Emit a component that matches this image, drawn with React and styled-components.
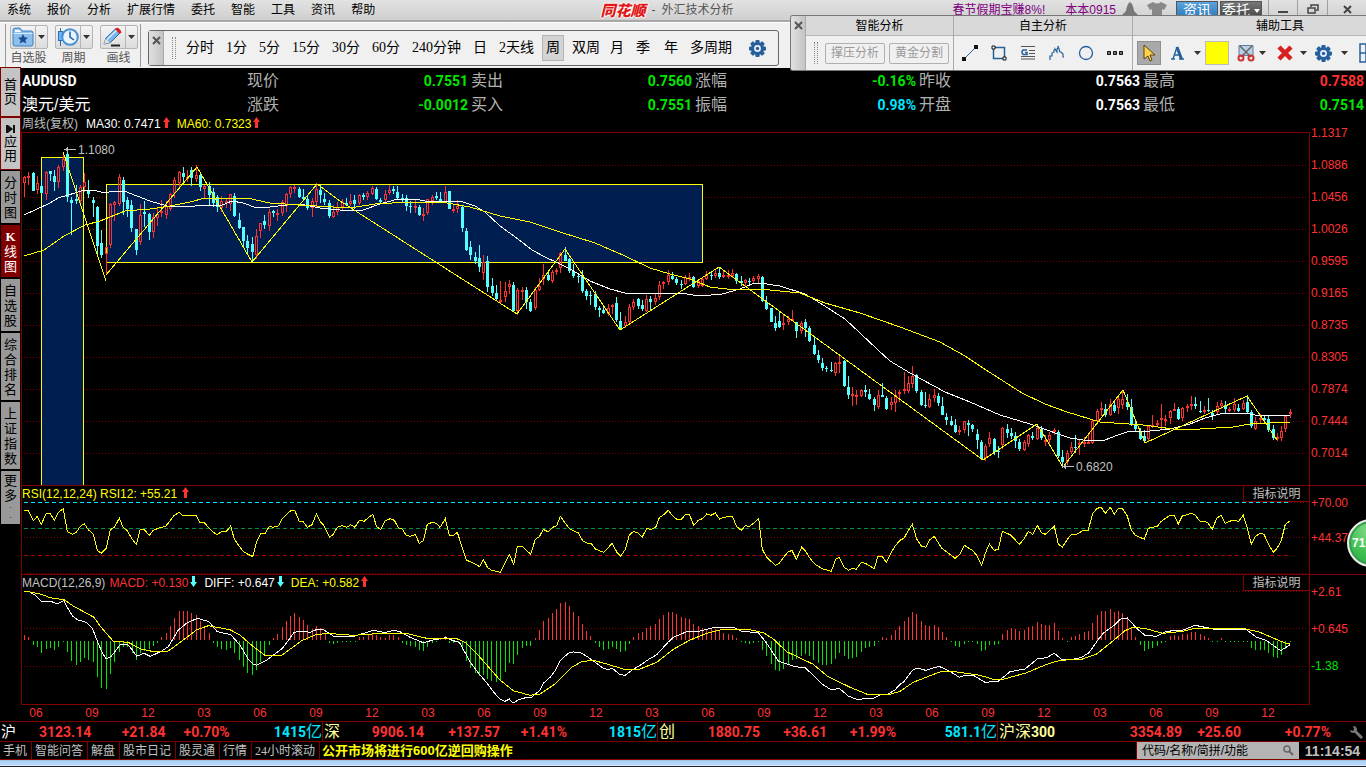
import React from 'react';
import styled, { createGlobalStyle, css } from 'styled-components';

const Global = createGlobalStyle`
  * { box-sizing: border-box; }
  html, body { margin: 0; background: #000; }
  body { font: 12px/16px "Liberation Sans", "Noto Sans CJK SC", sans-serif; color: #c0c0c0; }
  button { font: inherit; padding: 0; margin: 0; border: 0; background: none; color: inherit; }
  a { color: inherit; text-decoration: none; }
`;

const RED = '#ff3232';
const GREEN = '#00e600';
const CYAN = '#00e6ff';
const LINE = '#800000';

const Page = styled.div`
  position: relative;
  overflow: hidden;
  min-width: 1100px;
  background: #000;
`;

/* ---------- title bar ---------- */
const TitleBar = styled.header`
  display: grid;
  grid-template-columns: 1fr auto 1fr;
  height: 22px;
  background: linear-gradient(#e2e2e2, #cfcfcf);
  border-bottom: 2px solid #a8a8a8;
`;
const Menu = styled.nav`
  display: flex;
  align-items: center;
  gap: 16px;
  padding-left: 7px;
  color: #000;
`;
const Caption = styled.div`
  display: flex;
  align-items: center;
  gap: 6px;
  padding-right: 32px;
  color: #555;
`;
const Logo = styled.b`
  font: italic 900 15px/20px "Noto Sans CJK SC", sans-serif;
  color: #e01818;
  text-shadow: 1px 0 #fff, -1px 0 #fff, 0 1px #fff, 0 -1px #fff;
`;
const TitleRight = styled.div`
  display: flex;
  justify-content: flex-end;
  align-items: flex-start;
`;
const PurpleLink = styled.a`
  color: #800080;
  text-decoration: underline;
  line-height: 20px;
  margin-right: ${p => p.$gap}px;
`;
const TopIcon = styled.svg`
  margin: 2px 9px 0 0;
  flex: none;
`;
const TopButton = styled.button`
  width: 42px;
  height: 18px;
  margin: 1px ${p => (p.$blue ? 2 : 6)}px 0 0;
  border: 1px solid #555;
  font-size: 14px;
  line-height: 16px;
  white-space: nowrap;
  color: #fff;
  background: ${p => (p.$blue ? 'linear-gradient(#5ba3dd, #2c78bd)' : 'linear-gradient(#777, #444)')};
`;
const WinButton = styled.button`
  width: ${p => p.$w}px;
  height: 18px;
  border-left: 1px solid #a0a0a0;
  color: #444;
  display: flex;
  align-items: center;
  justify-content: center;
`;

/* ---------- toolbar ---------- */
const Toolbar = styled.div`
  display: flex;
  align-items: flex-start;
  height: 46px;
  background: #f0f0f0;
  border-top: 1px solid #fff;
`;
const BigGroup = styled.div`
  display: flex;
  gap: 6px;
  height: 43px;
  margin: 1px 0 0 5px;
  padding: 1px 2px 0 3px;
  border-left: 1px solid #999;
  border-right: 1px solid #999;
`;
const BigItem = styled.div`
  display: flex;
  flex-direction: column;
  align-items: center;
  width: 39px;
  line-height: 18px;
  color: #555;
  white-space: nowrap;
`;
const Split = styled.div`
  display: flex;
  width: 38px;
  height: 25px;
  border: 1px solid #b5b5b5;
  border-radius: 2px;
  background: linear-gradient(#f4f4f4, #dcdcdc);
`;
const SplitMain = styled.button`
  width: 25px;
  border-right: 1px solid #b5b5b5;
  display: grid;
  place-items: center;
`;
const SplitDrop = styled.button`
  flex: 1;
  display: grid;
  place-items: center;
`;
const PeriodBar = styled.div`
  display: flex;
  align-items: stretch;
  height: 36px;
  margin: 7px 0 0 7px;
  border: 1px solid #666;
  border-radius: 3px;
`;
const Handle = styled.button`
  flex: none;
  width: 15px;
  padding-top: ${p => p.$top}px;
  border-right: 1px solid #aaa;
  background: linear-gradient(90deg, #e0e0e0, #c4c4c4);
  display: flex;
  justify-content: center;
  align-items: flex-start;
`;
const Grip = styled.i`
  align-self: center;
  flex: none;
  width: 4px;
  height: 22px;
  margin: 0 ${p => p.$gap}px 0 8px;
  border-left: 1px dotted #888;
  border-right: 1px dotted #888;
`;
const Period = styled.button`
  align-self: center;
  flex: none;
  height: 26px;
  padding: 0 ${p => (p.$tight ? 1 : 3)}px;
  margin-right: ${p => (p.$tight ? 8 : 4)}px;
  border: 1px solid ${p => (p.$on ? '#b4b4b4' : 'transparent')};
  background: ${p => (p.$on ? '#d4d4d4' : 'none')};
  font: 14px/22px "Liberation Serif", "Noto Sans CJK SC", serif;
  color: #000;
  white-space: nowrap;
`;
const GearButton = styled.button`
  align-self: center;
  display: grid;
  margin: 0 12px 0 9px;
`;

/* ---------- floating drawing palette ---------- */
const Palette = styled.section`
  position: absolute;
  top: 15px;
  right: 0;
  z-index: 2;
  display: flex;
  width: 576px;
  height: 56px;
  overflow: hidden;
  border: 1px solid #777;
  border-right: 0;
  border-radius: 3px 0 0 3px;
  background: #f0f0f0;
`;
const PaletteGroup = styled.div`
  flex: none;
  width: ${p => p.$w}px;
  border-right: 1px solid #aaa;
`;
const PaletteTitle = styled.h2`
  height: 20px;
  margin: 0;
  border-bottom: 1px solid #b4b4b4;
  background: #d9d9d9;
  font-size: 12px;
  font-weight: 400;
  line-height: 20px;
  text-align: center;
  color: #000;
`;
const Tools = styled.div`
  display: flex;
  align-items: center;
  height: 34px;
  gap: ${p => p.$gap || 0}px;
  padding-left: ${p => p.$pad || 0}px;
`;
const TextTool = styled.button`
  flex: none;
  width: 60px;
  height: 21px;
  margin-right: 4px;
  border: 1px solid #b0b0b0;
  border-radius: 2px;
  line-height: 19px;
  color: #999;
`;
const Tool = styled.button`
  flex: none;
  width: ${p => p.$w || 21}px;
  height: 24px;
  display: grid;
  place-items: center;
  ${p => p.$on && css`background: #a9a9a9; border: 1px solid #909090;`}
`;
const Swatch = styled(Tool)`
  background: #ff0;
  border: 1px solid #bbb;
  margin: 0 6px 0 4px;
`;

/* ---------- body ---------- */
const Body = styled.div`
  display: flex;
  border-bottom: 1px solid ${LINE};
`;
const Side = styled.nav`
  flex: none;
  width: 21px;
  display: flex;
  flex-direction: column;
  gap: 2px;
  padding: 0 0 0 1px;
`;
const SideTab = styled.button`
  width: 19px;
  height: ${p => p.$h}px;
  display: flex;
  flex-direction: column;
  align-items: center;
  justify-content: center;
  font-size: 13px;
  line-height: ${p => (p.$light ? 14 : 15)}px;
  color: ${p => (p.$on ? '#fff' : '#000')};
  background: ${p => (p.$on ? LINE : p.$light ? '#c4c4c4' : '#999')};
  ${p => p.$light && css`box-shadow: 0 0 0 1px ${LINE};`}
  svg { margin-bottom: 2px; }
  b { font-family: "Liberation Serif", serif; }
  i { font: 8px/10px "Liberation Sans", sans-serif; }
`;
const Main = styled.main`
  flex: 1;
  min-width: 0;
`;
const Quote = styled.dl`
  display: grid;
  grid-template-columns: repeat(6, 1fr);
  grid-auto-rows: 24px;
  margin: 0;
  padding: 1px 0 0 1px;
`;
const Name = styled.div`
  font: ${p => (p.$code ? '700 14px/24px Roboto' : '16px/24px "Liberation Sans"')}, "Noto Sans CJK SC", sans-serif;
  color: #fff;
`;
const Cell = styled.div`
  display: flex;
  justify-content: space-between;
  padding: 0 2px 0 1px;
  line-height: 24px;
  dt { font-size: 16px; color: #b0b0b0; }
  dd { margin: 0; font: 700 14px/24px Roboto, sans-serif; color: ${p => p.$c}; }
`;
const Panel = styled.section`
  display: grid;
  grid-template-columns: 1fr 56px;
  ${p => p.$ruled && css`border-top: 1px solid ${LINE};`}
`;
const Frame = styled.div`
  border: 0 solid ${LINE};
  border-width: 0 1px;
  ${p => p.$last && css`border-bottom-width: 1px;`}
`;
const Plot = styled.svg`
  display: block;
  width: 100%;
  height: ${p => p.$h}px;
  ${p => p.$boxed && css`border: 1px solid ${LINE}; border-bottom: 0;`}
`;
const Legend = styled.div`
  display: flex;
  align-items: center;
  height: ${p => p.$h}px;
  padding-left: ${p => p.$pad || 0}px;
  line-height: ${p => p.$h}px;
  white-space: nowrap;
`;
const Item = styled.span`
  color: ${p => p.$c};
  margin-right: ${p => p.$gap || 0}px;
`;
const Explain = styled.button`
  align-self: stretch;
  width: 66px;
  margin-left: auto;
  border: 0 solid ${LINE};
  border-width: 0 0 1px 1px;
  line-height: 17px;
  color: #c0c0c0;
`;
const Axis = styled.div`
  display: flex;
  flex-direction: column;
  gap: ${p => p.$gap || 0}px;
  padding: ${p => (p.$gap ? 1 : 0)}px 0 0 1px;
  line-height: 32px;
  color: ${RED};
  span:last-child { color: ${p => p.$end || RED}; }
`;
const Dates = styled.div`
  display: flex;
  justify-content: space-between;
  height: 16px;
  padding: 0 84px 0 1px;
  color: ${RED};
  span { width: 28px; text-align: center; }
`;

/* ---------- bottom bars ---------- */
const IndexBar = styled.div`
  display: grid;
  grid-template-columns: 323fr 335fr 340fr 368fr;
  height: 20px;
  border-bottom: 1px solid ${LINE};
`;
const Index = styled.div`
  display: grid;
  grid-template-columns: ${p => p.$cols};
  border-right: ${p => (p.$end ? 0 : 1)}px solid ${LINE};
  font: 700 14px/20px Roboto, "Noto Sans CJK SC", sans-serif;
  color: ${RED};
  text-align: right;
  white-space: nowrap;
`;
const IndexName = styled.span`
  padding-left: 1px;
  font-size: ${p => (p.$first ? 15 : 16)}px;
  font-weight: 400;
  text-align: left;
  color: ${p => (p.$first ? '#fff' : '#ffff99')};
  b { font-size: 14px; }
`;
const Turnover = styled.span`
  color: ${CYAN};
  i { font-style: normal; font-weight: 400; font-size: 16px; }
`;
const Setup = styled.button`
  justify-self: start;
  align-self: center;
  display: grid;
  margin-left: 18px;
`;
const Footer = styled.footer`
  display: flex;
  align-items: stretch;
  height: 18px;
  border-bottom: 1px solid ${LINE};
  line-height: 18px;
`;
const FootLink = styled.a`
  padding: 0 4px 0 3px;
  border-right: 1px solid ${LINE};
  font-family: "Liberation Serif", "Noto Sans CJK SC", serif;
  white-space: nowrap;
`;
const Ticker = styled.b`
  flex: 1;
  padding-left: 2px;
  font: 700 13px/18px "Liberation Sans", "Noto Sans CJK SC", sans-serif;
  color: #ff0;
`;
const Search = styled.label`
  display: flex;
  align-items: center;
  width: 163px;
  padding: 0 5px 0 5px;
  border-left: 1px solid ${LINE};
  background: #b4b4b4;
  input {
    flex: 1;
    min-width: 0;
    padding: 0;
    border: 0;
    background: none;
    font: 12px/16px "Liberation Sans", "Noto Sans CJK SC", sans-serif;
    color: #000;
  }
  input::placeholder { color: #000; opacity: 1; }
`;
const Clock = styled.time`
  width: 67px;
  text-align: center;
  font-size: 14px;
  font-weight: 700;
`;
const Strip = styled.div`
  height: 7px;
  border-bottom: 1px solid #222;
  background: linear-gradient(#9cbcdc, #b4d4f8 30%, #b4d4f8 75%, #e8f4ff);
`;
const Badge = styled.button`
  position: absolute;
  top: 519px;
  right: -29px;
  width: 48px;
  height: 48px;
  border: 2px solid #eee;
  border-radius: 50%;
  background: radial-gradient(circle at 50% 20%, #8ade8a, #3cbf50 60%, #2aa545);
  box-shadow: inset 0 0 0 2px #3a9a4e;
  text-align: left;
  padding-left: 3px;
  font: 700 12px/16px "Liberation Sans", sans-serif;
  color: #fff;
`;

/* ---------- chart data, in thirds of a pixel from each block's origin ---------- */
const PRICE_BLOCKS = [
  [20, 130, `u13 137 142 158 200;u26 125 137 140 165;d40 126 129 182 183;u52 137 160 180 192;d65 150 168 188 190;u79 122 126 193 210;d91 122 123 131 152;d103 120 138 156 182;u115 104 112 155 173;u130 65 86 112 122;d142 60 72 202 215;d154 200 210 219 315;d169 165 208 212 222;u181 165 172 212 222;u193 129 157 171 185;d205 150 180 192 203;d220 200 210 219 260;d232 228 230 348 375;d244 300 338 375 384;u259 350 352 371 435;u271 218 222 344 355;u283 212 217 226 272;u298 132 142 223 228;d310 140 150 216 256;d322 200 209 237 260;d334 210 224 295 305;d349 297 298 360 375;u361 222 254 335 345;d373 212 245 252 290;d388 250 253 306 330;u400 250 262 306 324;u412 235 253 264 288;u424 210 244 250 262;u439 212 228 254 266;u451 188 192 238 242;u463 142 150 190 204;u478 122 127 158 170;d490 110 130 142 158;u502 120 140 144 156;d514 112 120 144 168;u529 105 136 146 156;d541 130 136 171 182;u553 164 168 178 204;d568 155 168 194 228;d580 174 187 219 230;d592 196 202 230 246;u604 198 213 234 246;u619 206 213 219 235;u631 192 193 222 244;d643 190 198 258 260;d658 248 270 294 296;d670 290 292 332 350;d682 314 332 354 368;d697 320 341 366 396;u709 298 318 374 386;u721 278 280 304 325;d733 254 272 284 298;u748 238 247 288 304;d760 240 242 248 262;u772 236 250 252 272;u787 210 216 248 258;u799 190 192 228 246;u811 168 172 192 204;u823 164 172 175 190;d838 172 177 202 204;d850 176 200 206 210;d862 196 208 234 240;u877 205 213 234 262;u889 160 178 216 232;d901 166 180 196 218;d913 190 206 216 224;d928 210 220 258 264;u940 225 247 261 264;u952 216 232 247 256`],
  [340, 150, `u7 148 156 170 184;d19 144 158 164 168;u31 132 153 162 168;d43 136 150 162 178;u58 132 136 158 164;d70 128 135 141 150;u82 124 128 142 150;u97 108 114 132 136;d109 112 116 146 150;d121 144 150 156 160;u136 120 132 150 158;u148 105 120 128 135;d160 108 117 123 132;d172 108 126 144 148;d187 132 144 150 158;d199 135 144 168 182;d211 156 169 172 188;u226 150 168 174 188;d238 165 170 195 198;u250 174 192 195 212;u262 148 148 190 195;u277 135 142 154 165;d289 126 138 144 150;d301 126 147 153 160;u316 108 126 158 160;d328 122 124 177 178;u340 164 177 180 188;u352 150 168 177 188;d367 168 170 234 246;d379 234 243 300 303;d391 273 291 315 330;d406 306 321 333 342;d418 285 324 351 366;u430 315 336 368 390;d442 318 333 411 426;d457 384 408 429 438;d469 405 429 447 453;u481 393 450 452 460;u496 396 423 441 456;u508 390 402 411 432;d520 396 405 483 486;u532 414 420 483 495;u547 410 420 423 450;d559 411 420 456 476;d571 447 456 483 486;u586 411 420 474 480;u598 384 408 420 424;u610 342 375 388 405;d625 360 375 390 393;u637 360 366 393 399;u649 354 360 363 375;u661 306 310 353 370;d676 291 315 333 333;d688 324 328 363 369;d700 342 363 378 384;d715 375 378 381 399;d727 360 375 423 429;d739 417 423 438 450;d751 423 434 437 465;d766 423 432 471 480;d778 468 474 480 501;d790 471 480 489 492;u805 462 474 492 498;u817 462 465 471 492;d829 441 459 510 516;d841 486 513 537 540;u856 498 516 528 534;u868 462 471 516 522;u880 447 456 472 480;d895 444 447 468 477;d907 450 465 477 483;u919 435 447 483 486;d931 438 447 456 483;u946 430 444 456 465;u958 393 405 441 450;u970 394 396 402 417`],
  [640, 230, `u85 120 135 156 165;d97 126 138 147 150;d109 140 147 160 165;d124 150 162 165 177;u136 135 142 162 165;u148 129 141 143 152;d160 138 141 171 174;u175 147 153 168 174;u187 144 147 168 171;u199 123 132 147 150;d214 124 135 138 150;u226 120 129 138 144;d238 111 129 141 147;u250 124 135 141 144;u265 120 135 138 147;u277 117 129 138 144;d289 129 132 153 162;d304 138 153 159 168;u316 147 150 160 168;d328 144 153 156 168;u340 138 144 153 162;u355 132 138 147 160;d367 138 141 213 216;d379 198 216 237 240;d394 234 234 276 276;d406 258 279 294 303;d418 246 273 291 294;u430 255 279 285 300;u445 258 267 276 285;u457 240 267 270 274;d469 276 276 303 324;u484 273 279 303 312;d496 268 276 294 321;d508 288 294 333 336;d523 321 345 372 375;d535 360 375 390 399;d547 384 399 414 423;d559 408 414 417 426;d574 396 420 423 426;u586 396 400 429 438;u598 375 396 399 429;d613 390 393 468 471;d625 438 471 495 507;u637 471 492 495 528;u649 480 495 497 525;u664 477 480 498 501;d676 465 480 486 501;d688 477 492 507 510;d703 501 507 525 543;u715 480 495 531 537;d727 459 495 501 501;d739 498 504 537 540;u754 501 516 525 540;u766 480 495 519 546;u778 480 486 489 516;u793 426 477 483 492;u805 438 459 483 489;u817 408 438 461 474;d829 432 435 483 489;d844 480 486 525 528;d856 486 525 528 534;u868 492 507 531 534;u883 477 495 504 516;d895 489 498 519 528;d907 501 528 555 555;d919 549 561 570 585;d934 558 573 585 588;d946 567 585 606 609;u958 588 600 605 615;u973 573 574 600 609;d985 570 579 585 618;d997 582 585 597 606;d1012 597 612 630 657;d1024 630 636 687 690;u1036 642 648 684 693`],
  [960, 370, `u88 186 204 222 232;d103 204 207 246 255;d115 228 243 247 264;u127 171 174 225 236;d142 162 177 189 204;d154 174 189 198 207;d166 186 198 213 234;d178 207 216 237 243;u193 210 216 240 243;u205 192 195 222 231;d217 186 198 204 210;u232 162 174 207 210;d244 168 177 204 209;u256 195 210 213 227;u268 186 195 210 222;u283 174 180 186 195;d295 180 186 258 264;d307 240 261 276 294;u322 240 250 276 285;u334 216 231 246 252;d346 195 231 234 250;u358 210 218 222 255;u373 200 216 219 231;u385 195 215 218 222;u397 150 153 219 222;u412 117 123 153 160;u424 96 114 120 138;d436 102 117 135 141;u451 87 102 135 138;d463 96 105 123 130;u475 81 87 114 132;u487 60 87 105 117;d502 72 96 111 120;d514 87 111 162 168;d526 150 162 177 186;d541 174 186 207 210;d553 180 198 213 220;u565 165 168 207 213;u577 135 165 170 174;u592 150 159 162 171;u604 102 144 150 177;u616 135 147 153 168;u631 120 123 145 162;u643 99 117 120 124;d655 111 117 147 150;u667 110 114 144 153;u682 102 108 114 126;u694 78 102 108 120;d706 81 102 108 117;d721 93 123 124 129;u733 108 120 123 132;d745 84 120 122 126;d757 120 129 138 150;u772 96 108 126 135;u784 90 99 108 117;d796 93 105 117 129;u808 110 117 118 127;u823 84 102 120 126;d835 102 114 122 126;u850 90 99 117 120;d862 75 96 126 129;d874 120 126 168 174;u886 141 153 177 180;u901 132 144 147 162;d913 138 145 150 152;d925 135 147 180 186;d940 165 177 204 210;u952 189 201 207 212;u964 168 183 204 213;u976 136 138 177 186;u991 117 126 132 144`],
];

const candles = PRICE_BLOCKS.flatMap(([ox, oy, rows]) =>
  rows.split(';').map(r => {
    const [x, ...ys] = r.slice(1).split(' ').map(Number);
    const [high, top, bottom, low] = ys.map(v => Math.round(oy + v / 3));
    return { up: r[0] === 'u', x: Math.floor(ox + x / 3), high, top, bottom, low };
  }));

const trace = blocks => blocks.map(([ox, oy, pts]) =>
  pts.trim().split(/\s+/).map(p => {
    const [x, y] = p.split(',').map(Number);
    return `${(ox + x / 3).toFixed(1)},${(oy + y / 3).toFixed(1)}`;
  }).join(' ')).join(' ');

const MA30 = '24,215 35,210 50,203 58,198 75,193 84,190 93,190 105,193 113,191 124,191 137,196 150,201 167,206 195,206 210,205 220,206 232,201 243,203 257,208 270,207 287,205 300,204 320,208 340,210 363,210 380,204 398,199 420,200 430,202 460,201 475,206 485,212 500,226 518,239 532,250 545,257 558,263 572,270 590,281 610,289 625,293 640,294 660,293 680,293 700,296 722,294 740,289 752,284 760,283 780,286 805,294 820,303 845,319 860,333 878,350 890,361 910,373 945,392 970,402 1000,415 1030,424 1058,434 1070,438 1090,441 1105,440 1118,435 1130,431 1150,431 1170,429 1190,424 1205,418 1220,414 1245,413 1255,415 1290,415';
const MA60 = '24,256 44,250 64,236 85,225 100,221 125,211 150,209 170,206 190,202 205,198 247,198 270,203 300,205 350,208 375,204 410,202 447,203 470,207 500,216 530,222 560,232 595,243 625,256 650,268 670,274 690,279 710,287 735,290 760,289 800,293 825,303 860,313 900,327 940,342 965,356 986,370 1022,393 1045,404 1067,412 1100,422 1143,425 1173,429 1200,429 1233,427 1250,424 1290,422';
const ZIGZAG = ['63,152 106,281', '106,275 197,167 252,262 317,184 340,201 517,314 565,249 620,330 719,267 983,460 1037,424 1063,467 1123,390 1145,443 1247,396 1277,440'];

const RSI = trace([
  [0, 480, '72,91 85,91 100,122 112,109 124,133 139,100 151,101 163,121 175,97 190,86 202,155 217,163 229,157 241,139 253,131 265,149 280,162 292,211 304,220 319,205 331,149 343,142 358,115 370,143 382,152 397,178 409,193 421,148 433,149 448,166 460,151 475,145 497,139 523,106 538,97 550,108 562,105 575,108 589,106 600,128 613,128 628,145 640,157 652,164 664,155 680,153 692,138 703,178 730,215 758,230 770,184 782,161 794,162 808,139 820,142 835,138 847,116 872,92 884,91 898,124 910,125 922,142 936,134 949,102 961,125 972,137 989,172 1000,163 1012,142 1025,137 1040,142 1052,134 1065,142 1078,121 1092,124 1118,103 1130,140 1142,149 1156,122 1171,116 1183,121 1195,143 1208,148 1218,166 1231,169 1246,164 1258,190 1270,182 1282,133 1297,127 1309,130 1320,142 1336,116 1348,166 1360,166 1372,157'],
  [440, 480, '66,200 79,240 105,252 119,260 130,238 143,263 155,271 181,277 208,223 221,253 232,200 248,200 272,223 286,178 298,170 310,148 325,156 338,142 350,137 361,109 388,146 403,154 415,158 428,182 442,190 454,191 466,207 491,217 517,190 530,216 542,229 556,208 568,165 581,154 595,160 607,171 620,145 632,149 647,142 658,113 671,104 685,91 697,106 710,118 724,118 737,103 748,103 761,136 775,121 787,116 800,102 813,106 826,99 839,118 850,112 877,109 890,140 904,151 916,137 928,139 941,130 956,116 967,208 980,232 1006,256 1018,250 1031,232 1043,217 1056,211 1069,238 1085,202 1097,214 1110,235 1125,253 1147,266 1174,274 1187,238 1198,232 1212,262 1226,271 1238,265 1249,268 1264,247 1276,250 1303,266 1314,228 1327,229 1339,247 1352,220 1366,197'],
  [900, 495, '0,136 12,130 24,108 37,88 50,132 64,153 77,157 88,136 103,124 125,160 150,178 165,190'],
  [960, 370, '0,553 13,526 37,541 50,556 65,586 76,550 88,522 103,541 115,538 127,484 152,495 178,523 192,507 205,484 218,493 232,466 244,488 256,493 283,469 295,522 307,532 320,511 334,493 346,495 372,480 385,480 398,430 412,415 424,412 436,430 451,412 463,433 475,415 487,415 502,438 514,480 526,496 553,508 565,475 577,472 592,469 604,454 630,436 643,437 655,462 667,438 694,430 706,436 720,454 733,454 745,460 757,478 770,445 784,436 796,460 808,454 820,451 836,454 850,436 862,475 874,522 886,499 901,490 912,493 925,522 940,547 952,534 964,511 976,463 990,453'],
]);
const DIFF = trace([
  [0, 480, '72,334 90,336 106,346 124,364 152,364 167,370 178,369 192,362 202,382 217,407 232,419 258,427 278,447 292,483 307,519 319,537 332,530 345,515 360,495 383,493 397,510 410,529 432,520 450,529 465,523 487,512 505,500 520,475 535,450 562,428 592,415 627,425 652,455 692,464 720,495 745,538 758,552 770,556 800,540 845,507 860,488 882,457 905,453 930,457 952,448 968,448 1000,468 1065,468 1120,451 1155,458 1180,451 1200,455 1230,472 1270,488 1300,480 1337,473 1360,482 1375,486'],
  [440, 480, '60,490 90,545 120,585 140,608 160,635 180,658 195,664 208,657 220,669 235,660 260,652 275,652 300,630 310,610 332,590 348,568 362,540 385,520 400,516 420,517 445,532 490,565 505,569 517,565 540,584 555,586 575,571 600,556 628,537 650,524 685,486 700,472 740,455 780,453 820,443 882,442 905,454 955,458 980,490 1015,543 1065,560 1095,563 1125,590 1145,612 1175,630 1198,625 1225,648 1250,658 1300,655 1320,645 1345,642 1365,630'],
  [900, 570, '0,343 10,337 38,300 50,294 77,301 117,289 150,304 178,322 195,316 220,316 255,337 295,334 330,305 375,297 412,267 440,263 463,250 485,268 510,270 545,262 567,248 590,215 610,189 645,164 662,147 682,144 712,177 735,196 770,199 800,184 850,180 885,166 945,178 1040,180 1070,202 1100,212 1142,242 1170,224'],
]);
const DEA = trace([
  [0, 480, '72,334 90,336 124,343 150,353 192,359 220,378 282,412 300,438 340,484 385,487 420,506 465,516 505,513 550,480 590,449 625,437 690,449 720,465 755,496 795,526 845,526 905,482 945,465 980,460 1060,466 1160,459 1215,459 1280,475 1370,476'],
  [440, 480, '60,480 75,487 105,515 180,600 220,632 270,646 300,642 345,612 395,562 425,545 460,541 500,552 550,567 600,567 650,547 700,508 750,480 800,460 850,448 930,449 970,458 1000,477 1040,515 1120,553 1160,587 1230,622 1285,644 1350,643'],
  [900, 570, '0,364 40,337 80,321 125,304 155,304 240,316 280,328 310,328 380,308 440,283 480,271 545,268 590,252 640,212 675,182 700,171 740,177 790,190 850,184 885,175 1030,175 1080,187 1110,200 1155,219 1170,219'],
]);
const BASE = 641;
const bars = [
  [0, 480, '72,465 85,471 100,494 112,502 124,518 139,506 151,504 163,509 175,501 190,486 202,515 214,543 229,555 241,546 253,534 265,540 280,546 292,590 304,624 319,627 331,582 343,545 358,516 370,502 382,500 397,520 409,540 421,520 433,513 448,506 460,497 472,488 484,471 499,460 511,438 523,415 538,393 550,393 562,393 575,399 589,405 600,422 613,438 628,459 640,488 652,500 664,506 680,510 692,504 704,518 718,540 730,561 742,578 757,585 769,570 781,545 793,521 808,494 820,475 832,463 847,441 859,423 871,408 883,399 898,411 910,420 922,435 936,447 949,438 961,445 976,460 988,488 1000,491 1012,489 1027,487 1039,486 1052,486 1066,486 1078,472 1090,471 1105,465 1117,460 1130,465 1142,471 1156,474 1168,465 1181,465 1195,472 1208,488 1220,496 1232,498 1246,502 1258,510 1270,513 1282,502 1297,489 1309,486 1321,475 1336,467 1348,488 1360,488 1375,490 1387,510 1399,543'],
  [440, 480, '92,565 106,578 118,587 130,584 143,598 155,603 169,606 181,601 196,576 208,548 221,552 232,525 248,504 260,498 272,498 286,474 298,450 310,423 325,414 338,399 349,387 361,369 376,366 388,378 400,396 415,408 428,432 440,453 452,468 466,489 478,501 491,510 505,507 517,501 529,507 542,516 556,513 568,492 581,471 595,459 607,456 620,444 632,438 646,432 658,417 671,405 685,396 697,396 710,402 724,411 737,415 748,418 761,432 775,438 787,444 800,448 813,444 826,447 839,450 850,459 866,462 878,466 890,474 904,486 916,489 928,492 941,489 956,487 967,510 980,528 994,552 1006,570 1018,573 1031,567 1045,552 1057,540 1069,537 1085,528 1097,522 1109,528 1121,540 1135,549 1147,554 1160,555 1174,552 1186,537 1198,519 1213,528 1225,537 1238,534 1249,531 1264,516 1276,504 1288,501 1303,498 1315,486 1327,471 1339,474 1354,465 1366,450 1378,438 1393,423 1405,411 1417,396 1429,402'],
  [900, 570, '64,153 77,165 88,168 103,165 115,171 127,186 140,201 154,216 166,228 178,231 193,222 205,216 217,214 232,222 244,243 256,240 269,226 283,225 295,222 307,192 322,180 334,174 346,177 358,183 373,180 385,171 398,168 412,156 424,162 437,165 449,165 463,159 475,183 488,204 501,216 514,202 526,198 538,192 553,186 565,183 577,159 592,135 604,123 616,123 631,117 643,126 655,123 667,129 682,141 694,174 706,201 721,225 733,243 745,237 757,234 772,228 784,219 796,216 811,198 823,195 835,198 847,192 862,192 874,186 886,186 901,192 913,198 925,204 937,216 952,216 964,204 976,216 991,216 1003,216 1016,216 1030,216 1042,216 1054,234 1066,240 1081,240 1093,240 1105,249 1120,261 1132,264 1144,255 1156,237 1171,216'],
].flatMap(([ox, oy, pts]) => pts.split(' ').map(p => {
  const [x, y] = p.split(',').map(Number);
  return { x: Math.floor(ox + x / 3), y: Math.round(oy + y / 3) };
}));

/* ---------- small drawings ---------- */
const Caret = () => <svg width="7" height="4"><path d="M0 0h7L3.500 4z" fill="#333" /></svg>;
const Cross = () => <svg width="9" height="9"><path d="M1 1l7 7M8 1L1 8" stroke="#555" strokeWidth="2" /></svg>;
const Arrow = ({ down }) => (
  <svg width="7" height="11" viewBox="0 0 7 11">
    {down
      ? <path d="M2 0h3v6h2L3.500 11 0 6h2z" fill="#5ff" />
      : <path d="M2 11h3V5h2L3.500 0 0 5h2z" fill={RED} />}
  </svg>
);
const Gear = ({ size = 16 }) => (
  <svg width={size} height={size} viewBox="0 0 16 16">
    <g fill="#26609c">
      {[0, 45, 90, 135].map(a => <rect key={a} x="6" y="0" width="4" height="16" rx="1" transform={`rotate(${a} 8 8)`} />)}
      <circle cx="8" cy="8" r="6" />
    </g>
    <circle cx="8" cy="8" r="3.200" fill="#eef" />
    <circle cx="8" cy="8" r="1.600" fill="#26609c" />
  </svg>
);
const Folder = () => (
  <svg width="22" height="20" viewBox="0 0 22 20">
    <path d="M1 3q0-2 2-2h5l2 3h9q2 0 2 2v11q0 2-2 2H3q-2 0-2-2z" fill="#8dbfee" stroke="#3d7fc0" />
    <path d="M3 3h5l1 2H3z" fill="#f4fbff" />
    <path d="M1.500 6.500h19" stroke="#d4ecff" />
    <path d="M11 7l1.500 3.300 3.500.4-2.600 2.300.8 3.500-3.200-1.800-3.200 1.800.8-3.500L6 10.700l3.500-.4z" fill="#184f94" />
  </svg>
);
const ClockIcon = () => (
  <svg width="22" height="20" viewBox="0 0 22 20">
    <path d="M3.500 1v18" stroke="#2a6db0" />
    <rect x="1.500" y="4.500" width="4" height="9" fill="#6cb4f4" stroke="#2a6db0" />
    <circle cx="13" cy="10" r="7.800" fill="#e8f4ff" stroke="#4a8fd0" strokeWidth="2" />
    <path d="M13 4.500V10l4 3" fill="none" stroke="#245f9f" strokeWidth="1.500" />
  </svg>
);
const Pencil = () => (
  <svg width="22" height="20" viewBox="0 0 22 20">
    <path d="M9 18.500h9" stroke="#222" strokeWidth="2" />
    <path d="M2 17l2-6L14 1.500l4.500 4L8.500 15.500z" fill="#79b4ea" stroke="#2b66a8" />
    <path d="M5 12.500L15 3" stroke="#d8eeff" strokeWidth="1.500" />
    <path d="M13 2q2-2 4-.5t2.500 4L17.500 7z" fill="#d42020" />
    <path d="M2 17l1.500-5L8 15.500z" fill="#f0e0c8" />
  </svg>
);

const Grid = ({ ys }) => ys.map(y => (
  <path key={y} d={`M24 ${y}.5H1308`} stroke={LINE} strokeDasharray="1 2" />
));
const Poly = ({ pts, c }) => <polyline points={pts} fill="none" stroke={c} />;

const PricePlot = () => (
  <Plot $h={353} $boxed viewBox="22 133 1287 352" preserveAspectRatio="none" shapeRendering="crispEdges">
    <Grid ys={[165, 197, 229, 261, 293, 325, 357, 389, 421, 453]} />
    <g fill="#001e50" stroke="#ff0">
      <rect x="41.500" y="157.500" width="42" height="340" />
      <rect x="106.500" y="184.500" width="596" height="78" />
    </g>
    {candles.map(c => c.up ? (
      <g key={c.x} fill={RED}>
        <rect x={c.x} y={c.high} width="1" height={Math.max(0, c.top - c.high)} />
        <rect x={c.x} y={c.bottom} width="1" height={Math.max(0, c.low - c.bottom)} />
        <rect x={c.x - .5} y={c.top + .5} width="2" height={Math.max(.5, c.bottom - c.top - 1)} fill="none" stroke={RED} />
      </g>
    ) : (
      <g key={c.x} fill="#5ff">
        <rect x={c.x} y={c.high} width="1" height={c.low - c.high} />
        <rect x={c.x - 1} y={c.top} width="3" height={Math.max(1, c.bottom - c.top)} />
      </g>
    ))}
    <Poly pts={MA30} c="#fff" />
    <Poly pts={MA60} c="#ff0" />
    {ZIGZAG.map(z => <Poly key={z} pts={z} c="#ff0" />)}
    <g fill="#c0c0c0" stroke="none" fontSize="12">
      <path d="M64 149.500l4-2.500v2h8v1h-8v2z" />
      <text x="78" y="154">1.1080</text>
      <path d="M1062 466.500l4-2.500v2h8v1h-8v2z" />
      <text x="1076" y="471">0.6820</text>
    </g>
  </Plot>
);

const RsiPlot = () => (
  <Plot $h={72} viewBox="22 502 1287 72" preserveAspectRatio="none" shapeRendering="crispEdges">
    <Grid ys={[537, 573]} />
    <path d="M1288 502.500h20" stroke={LINE} strokeDasharray="1 2" />
    <path d="M24 502.500H1288" stroke={CYAN} strokeDasharray="4 3" />
    <path d="M24 528.500H1288" stroke="#00904a" strokeDasharray="4 3" />
    <path d="M24 555.500H1288" stroke="#b00000" strokeDasharray="4 3" />
    <Poly pts={RSI} c="#ff0" />
  </Plot>
);

const MacdPlot = () => (
  <Plot $h={113} viewBox="22 591 1287 113" preserveAspectRatio="none" shapeRendering="crispEdges">
    <Grid ys={[591, 628, 666]} />
    {bars.map(b => b.y < BASE
      ? <rect key={b.x} x={b.x} y={b.y} width="1" height={BASE - 1 - b.y} fill={RED} />
      : <rect key={b.x} x={b.x} y={BASE} width="1" height={Math.max(1, b.y - BASE)} fill={GREEN} />)}
    <Poly pts={DIFF} c="#fff" />
    <Poly pts={DEA} c="#ff0" />
  </Plot>
);

const BigButton = ({ label, icon }) => (
  <BigItem>
    <Split>
      <SplitMain aria-label={label}>{icon}</SplitMain>
      <SplitDrop aria-label={label + '菜单'}><Caret /></SplitDrop>
    </Split>
    {label}
  </BigItem>
);

const QUOTES = [
  ['现价', '0.7551', GREEN], ['卖出', '0.7560', GREEN], ['涨幅', '-0.16%', GREEN], ['昨收', '0.7563', '#fff'], ['最高', '0.7588', RED],
  ['涨跌', '-0.0012', GREEN], ['买入', '0.7551', GREEN], ['振幅', '0.98%', CYAN], ['开盘', '0.7563', '#fff'], ['最低', '0.7514', GREEN],
];
const TABS = [['分时图', 52], ['K线图', 52, true], ['自选股', 52], ['综合排名', 67], ['上证指数', 67], ['更多··', 53]];
const INDICES = [
  ['沪', '', '3123.14', '+21.84', '+0.70%', '1415', '16px 75fr 74fr 64fr 92fr'],
  ['深', '', '9906.14', '+137.57', '+1.41%', '1815', '16px 85fr 76fr 67fr 90fr'],
  ['创', '', '1880.75', '+36.61', '+1.99%', '581.1', '16px 86fr 67fr 69fr 101fr'],
  ['沪深', '300', '3354.89', '+25.60', '+0.77%', null, '60px 124fr 59fr 90fr 35fr'],
];
const DATES = ['06', '09', '12', '03'];

const SideChar = ({ c }) => (c === 'K' ? <b>K</b> : c === '·' ? <i>·</i> : <span>{c}</span>);

export default function App() {
  return (
    <Page>
      <Global />
      <TitleBar>
        <Menu>
          {['系统', '报价', '分析', '扩展行情', '委托', '智能', '工具', '资讯', '帮助'].map(m => <button key={m}>{m}</button>)}
        </Menu>
        <Caption><Logo>同花顺</Logo><span>-</span><span>外汇技术分析</span></Caption>
        <TitleRight>
          <PurpleLink href="#promo" $gap={20}>春节假期宝赚8%!</PurpleLink>
          <PurpleLink href="#user" $gap={6}>本本0915</PurpleLink>
          <TopIcon width="16" height="16"><path d="M8 0q3 2 4 9l4 4H0l4-4q1-7 4-9z" fill="#777" /></TopIcon>
          <TopIcon width="20" height="14"><path d="M0 3l6-3q4 3 8 0l6 3-3 5-2-1v7H5V7L3 8z" fill="#888" /></TopIcon>
          <TopButton $blue>资讯</TopButton>
          <TopButton>委托 <svg width="6" height="9"><path d="M0 3h6L3 7z" fill="#fff" /></svg></TopButton>
          <WinButton $w={29} aria-label="最小化"><svg width="10" height="9"><path d="M0 7h10" stroke="#444" strokeWidth="2" /></svg></WinButton>
          <WinButton $w={30} aria-label="还原"><svg width="12" height="10"><path d="M4 3V1h7v5H9M1 4h7v5H1z" fill="none" stroke="#444" strokeWidth="1.500" /></svg></WinButton>
          <WinButton $w={39} aria-label="关闭"><svg width="9" height="9"><path d="M1 1l7 7M8 1L1 8" stroke="#444" strokeWidth="2" /></svg></WinButton>
        </TitleRight>
      </TitleBar>

      <Toolbar>
        <BigGroup>
          <BigButton label="自选股" icon={<Folder />} />
          <BigButton label="周期" icon={<ClockIcon />} />
          <BigButton label="画线" icon={<Pencil />} />
        </BigGroup>
        <PeriodBar>
          <Handle $top={5} aria-label="关闭周期栏"><Cross /></Handle>
          <Grip $gap={6} />
          {['分时', '1分', '5分', '15分', '30分', '60分', '240分钟', '日', '2天线', '周', '双周', '月', '季', '年', '多周期'].map(t => (
            <Period key={t} $on={t === '周'} $tight={t === '季' || t === '月'}>{t}</Period>
          ))}
          <GearButton aria-label="设置"><Gear size={17} /></GearButton>
        </PeriodBar>
      </Toolbar>

      <Palette>
        <Handle $top={5} aria-label="关闭工具栏"><Cross /></Handle>
        <PaletteGroup $w={148}>
          <PaletteTitle>智能分析</PaletteTitle>
          <Tools>
            <Grip $gap={7} />
            <TextTool>撑压分析</TextTool>
            <TextTool>黄金分割</TextTool>
          </Tools>
        </PaletteGroup>
        <PaletteGroup $w={179}>
          <PaletteTitle>自主分析</PaletteTitle>
          <Tools $gap={8} $pad={5}>
            <Tool aria-label="直线"><svg width="16" height="16"><path d="M2 14L14 2" stroke="#26609c" /><path d="M0 12h4v4H0zM12 0h4v4h-4z" fill="#111" /></svg></Tool>
            <Tool aria-label="矩形"><svg width="16" height="16"><path d="M2.500 2.500h11v11h-11z" fill="none" stroke="#26609c" strokeWidth="1.500" /><path d="M1 1h3v3H1zM12 12h3v3h-3z" fill="#fff" stroke="#111" /></svg></Tool>
            <Tool aria-label="刻度"><svg width="16" height="14"><path d="M1 .5h14M9 4.500h6M9 7.500h6M1 10.500h14M1 13h14" stroke="#555" /><path d="M7 4H3q-2 2 0 4.500h4V6.500H5" fill="none" stroke="#26609c" strokeWidth="1.500" /></svg></Tool>
            <Tool aria-label="波浪"><svg width="16" height="16"><path d="M1 15v-4h2V8l2-1V5h1V4l2 3V4l1-1V1l2 6h1l2 2v3h1" fill="none" stroke="#26609c" strokeWidth="1.200" /></svg></Tool>
            <Tool aria-label="圆"><svg width="16" height="16"><circle cx="8" cy="8" r="6.500" fill="none" stroke="#26609c" strokeWidth="1.300" /></svg></Tool>
            <Tool aria-label="更多"><svg width="16" height="4"><path d="M.5.5h3v3h-3zM6.500.5h3v3h-3zM12.500.5h3v3h-3z" fill="#777" stroke="#111" /></svg></Tool>
          </Tools>
        </PaletteGroup>
        <PaletteGroup $w={295}>
          <PaletteTitle>辅助工具</PaletteTitle>
          <Tools $pad={4}>
            <Tool $w={24} $on aria-label="选择"><svg width="14" height="18"><path d="M2 1v14l4-3 2 5 2-1-2-5h5z" fill="#ffd24a" stroke="#5a4210" /></svg></Tool>
            <Tool $w={32} aria-label="文字"><svg width="14" height="14" viewBox="0 0 14 14"><path d="M1 13h4M9 13h5M3 13L7 1M4.500 9h5" fill="none" stroke="#26609c" strokeWidth="1.400" /><path d="M7 1l4.500 12" stroke="#26609c" strokeWidth="3" /></svg></Tool>
            <Tool $w={8} aria-label="文字菜单"><Caret /></Tool>
            <Swatch $w={24} aria-label="颜色" />
            <Tool aria-label="删除线段"><svg width="18" height="18"><path d="M2 1.500h14v10H2z" fill="#b8cfe4" stroke="#5a7da0" /><path d="M3 2l11 11M15 2L4 13" stroke="#666" strokeWidth="1.500" /><circle cx="4" cy="14" r="2.500" fill="none" stroke="#d03030" strokeWidth="2" /><circle cx="14" cy="14" r="2.500" fill="none" stroke="#d03030" strokeWidth="2" /></svg></Tool>
            <Tool $w={13} aria-label="删除线段菜单"><Caret /></Tool>
            <Tool $w={31} aria-label="全部删除"><svg width="16" height="16"><path d="M2 2l12 12M14 2L2 14" stroke="#d82020" strokeWidth="4.500" /></svg></Tool>
            <Tool $w={6} aria-label="全部删除菜单"><Caret /></Tool>
            <Tool $w={34} aria-label="设置"><Gear size={17} /></Tool>
            <Tool $w={8} aria-label="设置菜单"><Caret /></Tool>
            <Tool $w={42} aria-label="布局"><svg width="20" height="20"><path d="M1 1h18v18H1zM1 10h18M7 1v18" fill="none" stroke="#26609c" strokeWidth="1.500" /></svg></Tool>
          </Tools>
        </PaletteGroup>
      </Palette>

      <Body>
        <Side>
          <SideTab $h={48} $light><span>首</span><span>页</span></SideTab>
          <SideTab $h={51} $light>
            <svg width="9" height="8"><path d="M0 0h2v8H0zM7 0h2v8H7zM2 0l5 4-5 4z" fill="#111" /></svg>
            <span>应</span><span>用</span>
          </SideTab>
          {TABS.map(([t, h, on]) => (
            <SideTab key={t} $h={h} $on={on}>{[...t].map((c, i) => <SideChar key={i} c={c} />)}</SideTab>
          ))}
        </Side>
        <Main>
          <Quote>
            <Name $code>AUDUSD</Name>
            {QUOTES.slice(0, 5).map(([k, v, c]) => <Cell key={k} $c={c}><dt>{k}</dt><dd>{v}</dd></Cell>)}
            <Name>澳元/美元</Name>
            {QUOTES.slice(5).map(([k, v, c]) => <Cell key={k} $c={c}><dt>{k}</dt><dd>{v}</dd></Cell>)}
          </Quote>
          <Panel>
            <div>
              <Legend $h={15} $pad={1}>
                <Item $c="#c0c0c0" $gap={8}>周线(复权)</Item>
                <Item $c="#fff" $gap={2}>MA30: 0.7471</Item><Item $gap={7}><Arrow /></Item>
                <Item $c="#ff0" $gap={2}>MA60: 0.7323</Item><Item><Arrow /></Item>
              </Legend>
              <PricePlot />
            </div>
            <Axis>
              {['1.1317', '1.0886', '1.0456', '1.0026', '0.9595', '0.9165', '0.8735', '0.8305', '0.7874', '0.7444', '0.7014'].map(v => <span key={v}>{v}</span>)}
            </Axis>
          </Panel>
          <Panel $ruled>
            <Frame>
              <Legend $h={16}>
                <Item $c="#ff0" $gap={5}>RSI(12,12,24) RSI12: +55.21</Item><Item><Arrow /></Item>
                <Explain>指标说明</Explain>
              </Legend>
              <RsiPlot />
            </Frame>
            <Axis $gap={3}><span>+70.00</span><span>+44.37</span></Axis>
          </Panel>
          <Panel $ruled>
            <Frame $last>
              <Legend $h={16}>
                <Item $c="#c0c0c0" $gap={4}>MACD(12,26,9)</Item>
                <Item $c={RED} $gap={2}>MACD: +0.130</Item><Item $gap={7}><Arrow down /></Item>
                <Item $c="#fff" $gap={2}>DIFF: +0.647</Item><Item $gap={7}><Arrow down /></Item>
                <Item $c="#ff0" $gap={2}>DEA: +0.582</Item><Item><Arrow /></Item>
                <Explain>指标说明</Explain>
              </Legend>
              <MacdPlot />
            </Frame>
            <Axis $gap={5} $end={GREEN}><span>+2.61</span><span>+0.645</span><span>-1.38</span></Axis>
          </Panel>
          <Dates>{Array.from({ length: 23 }, (_, i) => <span key={i}>{DATES[i % 4]}</span>)}</Dates>
        </Main>
      </Body>

      <IndexBar>
        {INDICES.map(([n, s, a, b, c, t, cols], i) => (
          <Index key={n} $cols={cols} $end={i === 3}>
            <IndexName $first={i === 0}>{n}<b>{s}</b></IndexName>
            <span>{a}</span><span>{b}</span><span>{c}</span>
            {t ? <Turnover>{t}<i>亿</i></Turnover>
              : <Setup aria-label="设置指数"><svg width="14" height="14" viewBox="0 0 14 14"><path d="M6 6l7 7" stroke="#777" strokeWidth="3" /><path d="M4 1q4 0 4 3.500T4.500 8 1 5l3 1 1-2z" fill="#777" /></svg></Setup>}
          </Index>
        ))}
      </IndexBar>
      <Footer>
        {['手机', '智能问答', '解盘', '股市日记', '股灵通', '行情', '24小时滚动'].map(t => <FootLink key={t} href="#link">{t}</FootLink>)}
        <Ticker>公开市场将进行600亿逆回购操作</Ticker>
        <Search>
          <input aria-label="搜索" placeholder="代码/名称/简拼/功能" />
          <svg width="11" height="11"><circle cx="4" cy="4" r="3" fill="none" stroke="#666" strokeWidth="1.500" /><path d="M6 6l4 4" stroke="#666" strokeWidth="2" /></svg>
        </Search>
        <Clock>11:14:54</Clock>
      </Footer>
      <Strip />
      <Badge>71</Badge>
    </Page>
  );
}
